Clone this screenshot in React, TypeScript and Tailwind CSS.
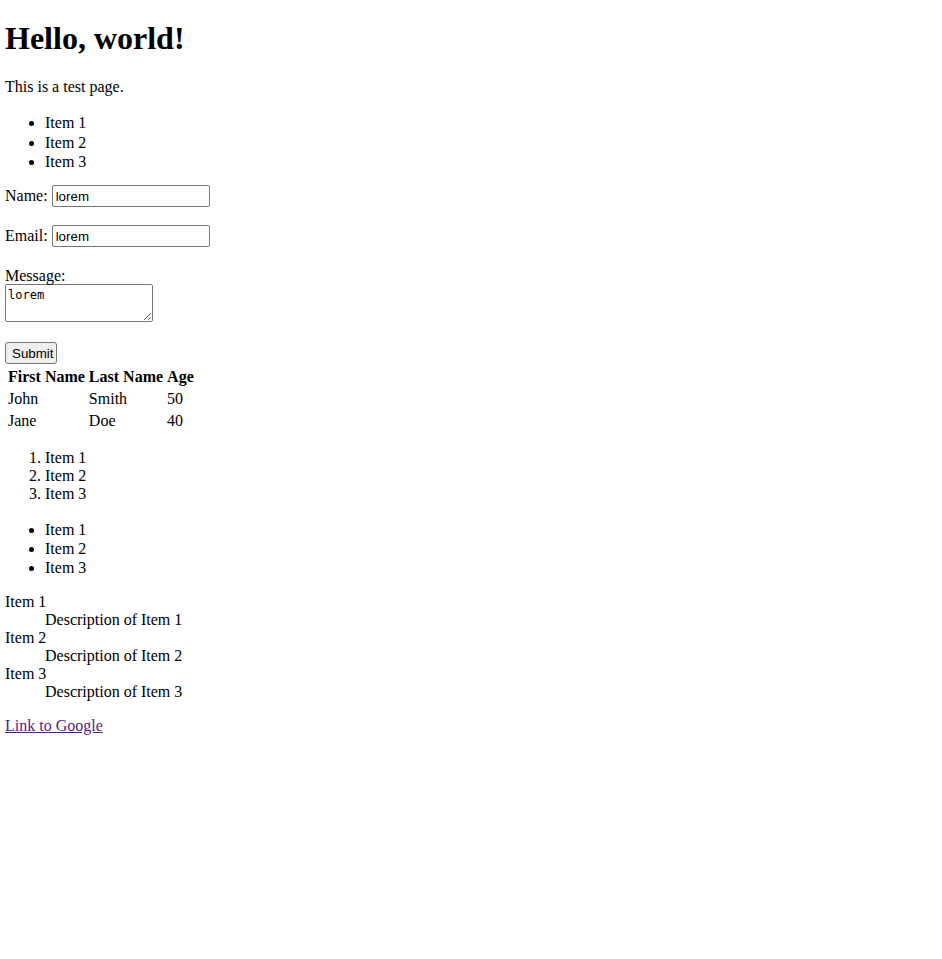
const inputCls =
  "h-[22px] w-[158px] rounded-[2px] border border-[#767676] bg-white px-[3px] py-px font-['Liberation_Sans',sans-serif] text-[13.33px] text-black";

export default function App() {
  return (
    <div className="flow-root min-h-screen bg-white px-[5px] font-['Liberation_Serif',serif] text-[16px] leading-[normal] text-black">
      <h1 className="mt-[19.5px] mb-[21.44px] text-[32px] leading-[normal] font-bold">Hello, world!</h1>
      <p className="my-4">This is a test page.</p>
      <ul className="mt-[17.5px] mb-[13px] list-disc pl-10">
        <li className="leading-[19.3px]">Item 1</li>
        <li className="leading-[19.3px]">Item 2</li>
        <li className="leading-[19.3px]">Item 3</li>
      </ul>

      <form>
        <p className="mt-[13px] mb-4 flex items-baseline py-px">
          <label className="mr-[4px]">Name:</label>
          <input type="text" defaultValue="lorem" className={inputCls} />
        </p>
        <p className="my-4 flex items-baseline py-px">
          <label className="mr-[4px]">Email:</label>
          <input type="email" defaultValue="lorem" className={inputCls} />
        </p>
        <div className="mt-4 mb-[20.5px]">
          <label className="block pt-[3px]">Message:</label>
          <textarea
            defaultValue="lorem"
            className="mt-[-1.4px] block h-[38px] w-[148px] rounded-[2px] border border-[#767676] bg-white px-[2px] pt-[3px] font-['DejaVu_Sans_Mono',monospace] text-[12px] leading-[normal] text-black"
          />
        </div>
        <button
          type="submit"
          className="block h-[22px] w-[52px] rounded-[3px] border border-[#767676] bg-[#efefef] px-[6px] py-px font-['Liberation_Sans',sans-serif] text-[13.33px] text-black"
        >
          Submit
        </button>
      </form>

      <table className="mt-px border-separate border-spacing-[2px]">
        <thead>
          <tr>
            <th className="p-px text-left font-bold">First Name</th>
            <th className="p-px text-left font-bold">Last Name</th>
            <th className="p-px text-left font-bold">Age</th>
          </tr>
        </thead>
        <tbody>
          <tr>
            <td className="p-px">John</td>
            <td className="p-px">Smith</td>
            <td className="p-px">50</td>
          </tr>
          <tr>
            <td className="p-px">Jane</td>
            <td className="p-px">Doe</td>
            <td className="p-px">40</td>
          </tr>
        </tbody>
      </table>

      <ol className="my-4 list-decimal pl-10">
        <li>Item 1</li>
        <li>Item 2</li>
        <li>Item 3</li>
      </ol>
      <ul className="mt-[16.5px] mb-[15px] list-disc pl-10">
        <li className="leading-[19px]">Item 1</li>
        <li className="leading-[19px]">Item 2</li>
        <li className="leading-[19px]">Item 3</li>
      </ul>

      <dl className="my-4">
        <dt>Item 1</dt>
        <dd className="ml-10">Description of Item 1</dd>
        <dt>Item 2</dt>
        <dd className="ml-10">Description of Item 2</dd>
        <dt>Item 3</dt>
        <dd className="ml-10">Description of Item 3</dd>
      </dl>

      <a href="#" className="text-[#551a8b] underline">
        Link to Google
      </a>
    </div>
  );
}
